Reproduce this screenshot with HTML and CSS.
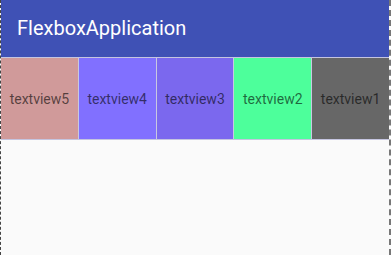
FILE: index.html
```html
<!DOCTYPE html>
<html lang="en">
<head>
  <meta charset="UTF-8" />
  <title>FlexboxApplication</title>
  <link rel="stylesheet" href="styles.css">
</head>
<body>
  <div class="screen">
    <header class="toolbar">FlexboxApplication</header>
    <div class="flexbox">
      <div class="item item5">textview5</div>
      <div class="item item4">textview4</div>
      <div class="item item3">textview3</div>
      <div class="item item2">textview2</div>
      <div class="item item1">textview1</div>
    </div>
  </div>
</body>
</html>
```

FILE: styles.css
```css
html, body {
  margin: 0;
  height: 100%;
}

body {
  font-family: Roboto, "Noto Sans", sans-serif;
  background: #fafafa;
}

.screen {
  height: 100%;
  box-sizing: border-box;
  border-left: 1px dashed #444;
  border-right: 2px dashed #777;
  background: #fafafa;
}

.toolbar {
  height: 57px;
  box-sizing: border-box;
  padding: 0 0 2px 16px;
  display: flex;
  align-items: center;
  background: #3f51b5;
  color: #fff;
  font-size: 20px;
}

.flexbox {
  display: flex;
  border-top: 1px solid #c5c5e0;
  border-bottom: 1px solid #c5c5e0;
}

.item {
  flex: 1;
  height: 81px;
  display: flex;
  align-items: center;
  justify-content: center;
  font-size: 14px;
  color: rgba(0, 0, 0, 0.6);
  border-right: 1px solid #c8c8e0;
}

.item:last-child {
  border-right: none;
}

.item5 { background: #d09a9a; }
.item4 { background: #8170ff; }
.item3 { background: #7b68ee; }
.item2 { background: #4dff9b; }
.item1 { background: #676767; }
```
